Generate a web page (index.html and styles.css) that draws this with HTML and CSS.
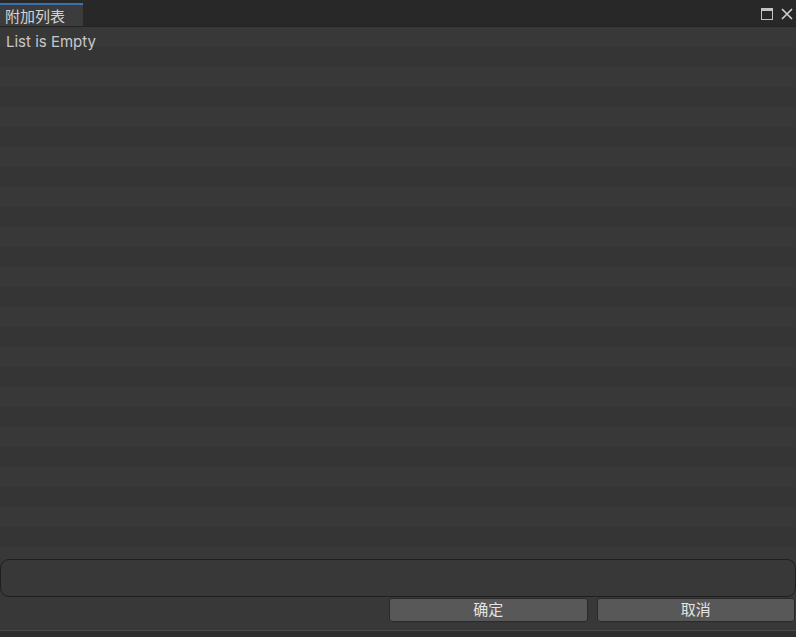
FILE: index.html
```html
<!DOCTYPE html>
<html>
<head>
<meta charset="utf-8">
<link rel="stylesheet" href="styles.css">
</head>
<body>
<div class="window">
  <div class="tabbar">
    <div class="tab"><span class="tab-title">附加列表</span></div>
    <div class="tab-spacer"></div>
    <div class="win-icons">
      <svg class="icon" width="12" height="12" viewBox="0 0 12 12">
        <rect x="0.5" y="0.5" width="11" height="11" fill="none" stroke="#c4c4c4" stroke-width="1"/>
        <rect x="0.5" y="0.5" width="11" height="2.5" fill="#c4c4c4"/>
      </svg>
      <svg class="icon" width="12" height="12" viewBox="0 0 12 12">
        <path d="M1 1 L11 11 M11 1 L1 11" stroke="#d2d2d2" stroke-width="1.6" fill="none"/>
      </svg>
    </div>
  </div>
  <div class="list">
    <div class="empty">List is Empty</div>
  </div>
  <div class="field-row">
    <div class="field"></div>
  </div>
  <div class="buttons">
    <div class="btn">确定</div>
    <div class="btn">取消</div>
  </div>
  <div class="footer"></div>
</div>
</body>
</html>
```
FILE: styles.css
```css
html, body {
  margin: 0;
  padding: 0;
  background: #383838;
}
.window {
  width: 796px;
  height: 637px;
  display: flex;
  flex-direction: column;
  font-family: "Inter", "Noto Sans CJK SC", sans-serif;
  overflow: hidden;
}
.tabbar {
  height: 26px;
  flex: none;
  background: #282828;
  display: flex;
  align-items: flex-end;
  border-bottom: 1px solid #232323;
}
.tab {
  width: 83px;
  height: 21px;
  background: #3c3c3c;
  border-top: 2px solid #3a72b0;
  display: flex;
  align-items: center;
}
.tab-title {
  color: #d2d2d2;
  font-size: 15px;
  padding-left: 5px;
  padding-top: 1px;
  line-height: 21px;
}
.tab-spacer { flex: 1; }
.win-icons {
  align-self: stretch;
  display: flex;
  align-items: center;
  gap: 8px;
  padding-right: 3px;
  padding-top: 2px;
}
.icon { display: block; }
.list {
  flex: 1;
  background: repeating-linear-gradient(to bottom, #383838 0px, #383838 20px, #353535 20px, #353535 40px);
}
.empty {
  color: #c8c8c8;
  font-size: 15px;
  padding: 5px 0 0 6px;
  line-height: 20px;
}
.field-row {
  flex: none;
  padding: 4px 0 1px 0;
  background: #383838;
}
.field {
  height: 36px;
  border: 1px solid #1f1f1f;
  border-radius: 9px;
  background: #383838;
}
.buttons {
  flex: none;
  display: flex;
  gap: 9px;
  padding: 0 1px 0 389px;
  height: 24px;
  background: #383838;
}
.btn {
  flex: 1;
  height: 22px;
  background: #585858;
  border: 1px solid #2a2a2a;
  border-radius: 3px;
  color: #e4e4e4;
  font-size: 15px;
  line-height: 22px;
  text-align: center;
}
.footer {
  flex: none;
  height: 6px;
  margin-top: 8px;
  border-top: 1px solid #4a4a4a;
  background: #2e2e2e;
}
```
